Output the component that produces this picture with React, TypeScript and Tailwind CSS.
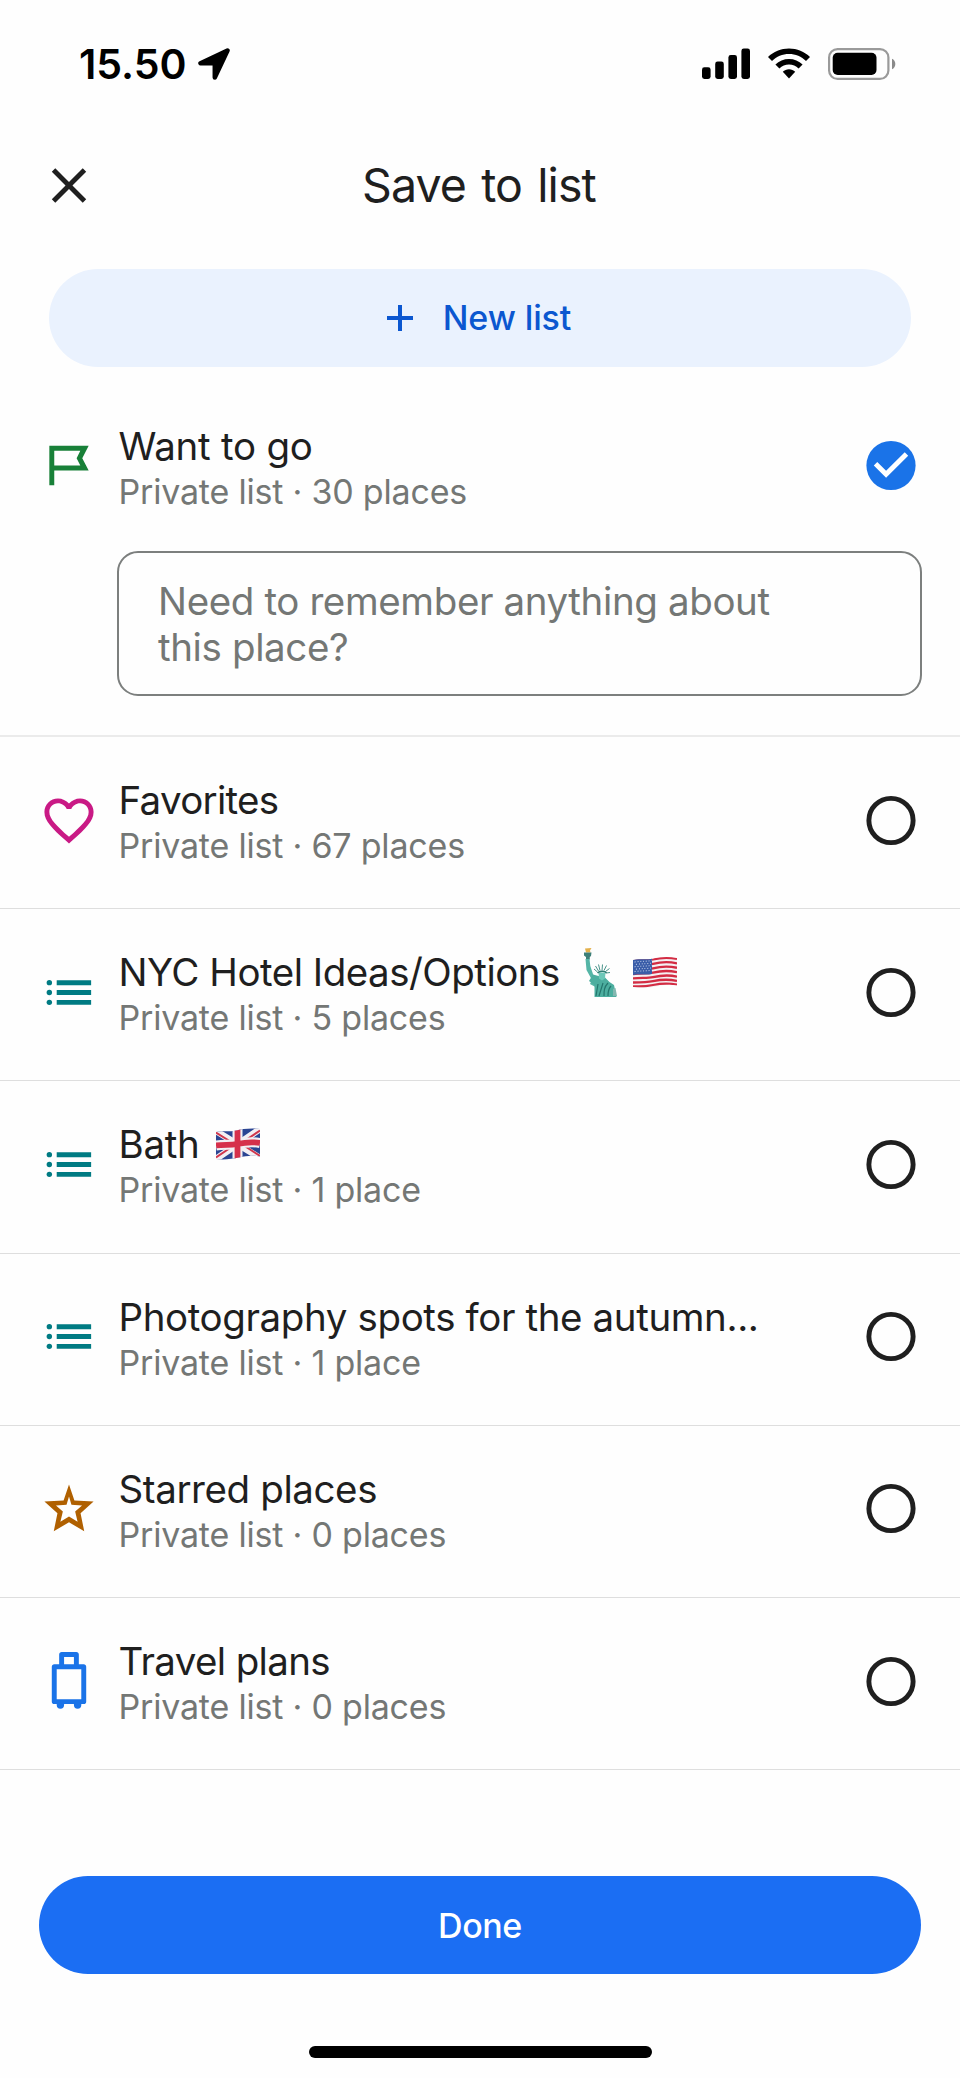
import { useState } from 'react';
import type { ReactNode } from 'react';

type IconName = 'flag' | 'heart' | 'list' | 'star' | 'luggage';

interface PlaceList {
  id: string;
  name: string;
  places: string;
  icon: IconName;
  tracking: string;
  emoji?: ReactNode;
}

function ListIcon({ name }: { name: IconName }) {
  if (name === 'flag') {
    return (
      <svg viewBox="0 0 24 24" className="w-[60px] h-[59px] shrink-0 text-[#188038]" fill="currentColor">
        <path fillRule="evenodd" d="M4 4h16l-2.6 5 2.6 5H6v6H4V4zm2 2v6h10.6l-1.5-3 1.5-3H6z" />
      </svg>
    );
  }
  if (name === 'heart') {
    return (
      <svg viewBox="0 0 24 24" className="w-[60px] h-[59px] shrink-0 text-[#c91a85]" fill="currentColor">
        <path d="M16.5 3c-1.74 0-3.41.81-4.5 2.09C10.91 3.81 9.24 3 7.5 3 4.42 3 2 5.42 2 8.5c0 3.78 3.4 6.86 8.55 11.54L12 21.35l1.45-1.32C18.6 15.36 22 12.28 22 8.5 22 5.42 19.58 3 16.5 3zm-4.4 15.55l-.1.1-.1-.1C7.14 14.24 4 11.39 4 8.5 4 6.5 5.5 5 7.5 5c1.54 0 3.04.99 3.57 2.36h1.87C13.46 5.99 14.96 5 16.5 5c2 0 3.5 1.5 3.5 3.5 0 2.89-3.14 5.74-7.9 10.05z" />
      </svg>
    );
  }
  if (name === 'list') {
    return (
      <svg viewBox="0 0 24 24" className="w-[60px] h-[59px] shrink-0 text-[#007b83]" fill="currentColor">
        <circle cx="4" cy="8" r="1.1" />
        <circle cx="4" cy="12" r="1.1" />
        <circle cx="4" cy="16" r="1.1" />
        <path d="M7 7h14v2H7zM7 11h14v2H7zM7 15h14v2H7z" />
      </svg>
    );
  }
  if (name === 'star') {
    return (
      <svg viewBox="0 0 24 24" className="w-[60px] h-[59px] shrink-0 text-[#b06000]" fill="currentColor">
        <path
          fillRule="evenodd"
          d="M12 2.200 14.200 8.700 22 9.200 16.700 13.900 18.200 21.300 12 17.600 5.800 21.300 7.300 13.900 2 9.200 9.800 8.700zM12 7.100 11 10.500 6.700 10.800 9.500 13.200 8.500 17.400 12 15.300 15.500 17.400 14.500 13.200 17.300 10.800 13 10.500z"
        />
      </svg>
    );
  }
  return (
    <svg viewBox="0 0 24 24" className="w-[60px] h-[59px] shrink-0 text-[#1a73e8]" fill="currentColor">
      <path
        fillRule="evenodd"
        d="M8 5V1c0-.55.45-1 1-1h6c.55 0 1 .45 1 1v4h2c.55 0 1 .45 1 1v14.200c0 .55-.45 1-1 1h-1v.4a1.500 1.500 0 0 1-3 0v-.4h-4v.4a1.500 1.500 0 0 1-3 0v-.4H6c-.55 0-1-.45-1-1V6c0-.55.45-1 1-1h2zm2-3v3h4V2h-4zM7 7v12.200h10V7H7z"
      />
    </svg>
  );
}

function LibertyEmoji() {
  return (
    <svg viewBox="0 0 34 50" className="w-[34px] h-[50px]">
      <path d="M2 1.500 8.500 1 7 3.500 7.500 5.500H3z" fill="#e3b04b" />
      <path d="M1 5.500h7.500L8 9 6.800 10v2.500H3V10L1 8.500z" fill="#3d7f78" />
      <path d="M2.500 12h4l.8 7 3 9 3.200 5-1 7-5.500-3 2-4L3.500 23z" fill="#55b5a6" />
      <path d="M6 34l4-6.500 5.500 1.500 6 1 5 5 4.500 3 2.500 12h-22V38z" fill="#4cae9f" />
      <path d="M15.500 25.500h7l-.5 6-3 2-3-2z" fill="#6cc7b8" />
      <path
        d="M14.500 25l-3.500-3M15.500 24l-3-5M17 23.500l-1.500-6M19 23.500l.5-6M21 23.500l2.500-5M22.500 24.500l4-3M23 26l4-.5"
        stroke="#4a948b"
        strokeWidth="1"
      />
      <path d="M14.500 26c2-2 7-2.500 9 0" stroke="#2f7d74" strokeWidth="1.600" fill="none" />
      <path d="M15 37l-2 12M20 36l-4 13M25 36c-4 4-4 8-4 13M28 39c-3 3-3 6-3 10" stroke="#24766d" strokeWidth="1.200" fill="none" />
      <path d="M30 42l2.500-1 1.500 8h-4z" fill="#83b7b0" />
    </svg>
  );
}

function UsFlagEmoji() {
  return (
    <svg viewBox="0 0 44 32" className="w-[44px] h-[32px]">
      <defs>
        <clipPath id="us-wave">
          <path d="M0 4c8-1.500 14 0 20-1.500S35 0 44 2v27.500c-8-1.500-14-.5-21 1S8 32 0 31z" />
        </clipPath>
      </defs>
      <g clipPath="url(#us-wave)">
        <rect width="44" height="32" fill="#f4f1f3" />
        <g stroke="#d32c43" strokeWidth="2.300" fill="none">
          <path d="M0 5c8-1.500 14 0 20-1.500S35 1 44 3" />
          <path d="M0 9.400c8-1.500 14 0 20-1.500s15-2.500 24-.5" />
          <path d="M0 13.800c8-1.500 14 0 20-1.500s15-2.500 24-.5" />
          <path d="M0 18.200c8-1.500 14 0 20-1.500s15-2.500 24-.5" />
          <path d="M0 22.400c8-1 14 0 20-1.300s15-2.500 24-.5" />
          <path d="M0 26.500c8 0 14 0 20-1.300s15-2.300 24-.3" />
          <path d="M0 30.300c8 .5 14 0 20-1.300s15-2.300 24-.3" />
        </g>
        <path d="M0 3.500c8-1.500 14 0 19-1.500V18c-6 1.200-11-.3-19 1z" fill="#3a5da8" />
        <g stroke="#c6d3ec" strokeWidth="1" strokeDasharray="1 1.800" fill="none">
          <path d="M1.500 6c7-1 12-.3 17-1.500" />
          <path d="M2.900 8.400c7-1 12-.3 16-1.500" />
          <path d="M1.500 10.800c7-1 12-.3 17-1.500" />
          <path d="M2.900 13.200c7-1 12-.3 16-1.500" />
          <path d="M1.500 15.600c7-1 12-.3 17-1.500" />
        </g>
      </g>
    </svg>
  );
}

function UkFlagEmoji() {
  return (
    <svg viewBox="0 0 44 32" className="w-[44px] h-[32px]">
      <defs>
        <clipPath id="uk-wave">
          <path d="M0 4c8-1.500 14 0 20-1.500S35 0 44 1v27.500c-8-1.500-14-.5-21 1S8 32 0 31z" />
        </clipPath>
      </defs>
      <g clipPath="url(#uk-wave)">
        <rect width="44" height="32" fill="#2b4593" />
        <path d="M0 3l44 27M0 31 44 1" stroke="#f3eff3" strokeWidth="6.500" />
        <path d="M0 4.500 20 17M24 16 44 2.500M0 29.500 20 16M24 15l20 13" stroke="#d0364c" strokeWidth="2" />
        <path d="M21.500 0v32M0 17.500c8-1.300 14 0 21-1.500s15-2.500 23-1" stroke="#f3eff3" strokeWidth="10" fill="none" />
        <path d="M21.500 0v32M0 17.500c8-1.300 14 0 21-1.500s15-2.500 23-1" stroke="#d6304b" strokeWidth="5.800" fill="none" />
      </g>
    </svg>
  );
}

const wantToGo: PlaceList = {
  id: 'want',
  name: 'Want to go',
  places: '30 places',
  icon: 'flag',
  tracking: 'tracking-[-0.25px]',
};

const lists: PlaceList[] = [
  { id: 'favorites', name: 'Favorites', places: '67 places', icon: 'heart', tracking: 'tracking-[-0.7px]' },
  {
    id: 'nyc',
    name: 'NYC Hotel Ideas/Options',
    places: '5 places',
    icon: 'list',
    tracking: 'tracking-[-0.5px]',
    emoji: (
      <span className="flex items-center ml-[23px] gap-[16px]">
        <LibertyEmoji />
        <UsFlagEmoji />
      </span>
    ),
  },
  {
    id: 'bath',
    name: 'Bath',
    places: '1 place',
    icon: 'list',
    tracking: 'tracking-[-0.3px]',
    emoji: (
      <span className="flex items-center ml-[17px]">
        <UkFlagEmoji />
      </span>
    ),
  },
  {
    id: 'photo',
    name: 'Photography spots for the autumn...',
    places: '1 place',
    icon: 'list',
    tracking: 'tracking-[-0.39px]',
  },
  { id: 'starred', name: 'Starred places', places: '0 places', icon: 'star', tracking: 'tracking-[-0.4px]' },
  { id: 'travel', name: 'Travel plans', places: '0 places', icon: 'luggage', tracking: 'tracking-[-0.65px]' },
];

function StatusBar() {
  return (
    <div className="h-[128px] shrink-0 flex items-center justify-between pl-[79px] pr-[64px]">
      <div className="flex items-center gap-[11px]">
        <span className="text-[41px] leading-none font-semibold text-black">15.50</span>
        <svg viewBox="0 0 32 32" className="w-[32px] h-[32px]">
          <path d="M29.500 2.500 2.500 15.300H16.800V29.500z" fill="#000" stroke="#000" strokeWidth="4.500" strokeLinejoin="round" />
        </svg>
      </div>
      <div className="flex items-center">
        <svg viewBox="0 0 48 32" className="w-[48px] h-[32px] mr-[18px]">
          <rect x="0" y="19.300" width="8.600" height="11.700" rx="2.400" />
          <rect x="13.200" y="13.500" width="8.600" height="17.500" rx="2.400" />
          <rect x="26.400" y="7" width="8.600" height="24" rx="2.400" />
          <rect x="39.400" y="0.500" width="8.600" height="30.500" rx="2.400" />
        </svg>
        <svg viewBox="0 0 42 32" className="w-[42px] h-[32px] mr-[18px]">
          <path d="M21 .5C29 .5 36.500 3.600 42 9l-4 4C33.500 8.500 27.500 6 21 6S8.500 8.500 4 13L0 9C5.500 3.600 13 .5 21 .5z" />
          <path d="M21 11c5.200 0 10 2 13.600 5.500l-4 4C28 18 24.700 16.500 21 16.500S14 18 11.400 20.500l-4-4C11 13 15.800 11 21 11z" />
          <path d="M21 21.300c2.400 0 4.600.9 6.200 2.500L21 30.500l-6.200-6.700c1.600-1.600 3.800-2.500 6.200-2.500z" />
        </svg>
        <svg viewBox="0 0 68 32" className="w-[68px] h-[32px]">
          <rect x="1.100" y="1.100" width="59.300" height="29.800" rx="8.500" fill="none" stroke="#9a9a9a" strokeWidth="2.200" />
          <rect x="4.700" y="4.700" width="43.800" height="22.300" rx="5" />
          <path d="M64 10.700c2 .8 3.300 2.900 3.300 5.200S66 20.300 64 21.200z" fill="#8a8a8a" />
        </svg>
      </div>
    </div>
  );
}

function Radio({ checked }: { checked: boolean }) {
  if (checked) {
    return (
      <svg viewBox="0 0 24 24" className="w-[60px] h-[59px] shrink-0">
        <circle cx="12" cy="12" r="10" fill="#1a73e8" />
        <path d="M10 17l-5-5 1.410-1.410L10 14.170l7.590-7.590L19 8l-9 9z" fill="#fff" />
      </svg>
    );
  }
  return (
    <svg viewBox="0 0 24 24" className="w-[60px] h-[59px] shrink-0">
      <circle cx="12" cy="12" r="9" fill="none" stroke="#1f1f1f" strokeWidth="2" />
    </svg>
  );
}

function ListRow({ list, checked, onToggle }: { list: PlaceList; checked: boolean; onToggle: () => void }) {
  return (
    <button onClick={onToggle} className="w-full h-full flex items-center px-[39px] pb-[5px] text-left cursor-pointer">
      <ListIcon name={list.icon} />
      <div className="flex-1 pl-[19.5px] pt-[7px]">
        <div className="h-[44px] flex items-center text-[38.5px] leading-[44px] text-[#1f1f1f] whitespace-nowrap">
          <span className={list.tracking}>{list.name}</span>
          {list.emoji}
        </div>
        <div className="text-[34px] leading-[47px] tracking-[-0.2px] text-[#747775]">Private list · {list.places}</div>
      </div>
      <Radio checked={checked} />
    </button>
  );
}

export default function App() {
  const [selected, setSelected] = useState<string[]>(['want']);
  const [note, setNote] = useState('');

  const toggle = (id: string) => {
    setSelected((prev) => (prev.includes(id) ? prev.filter((s) => s !== id) : [...prev, id]));
  };

  return (
    <div className="w-[960px] h-[2078px] flex flex-col bg-[#fefefe] font-[Inter,'Liberation_Sans',sans-serif] overflow-hidden">
      <StatusBar />

      {/* Header */}
      <header className="h-[114px] shrink-0 grid grid-cols-[60px_1fr_60px] items-center px-[39px]">
        <button className="cursor-pointer">
          <svg viewBox="0 0 24 24" className="w-[60px] h-[59px]" fill="#1f1f1f">
            <path d="M19 6.410L17.590 5 12 10.590 6.410 5 5 6.410 10.590 12 5 17.590 6.410 19 12 13.410 17.590 19 19 17.590 13.410 12z" />
          </svg>
        </button>
        <h1 className="text-center text-[46.5px] leading-[58px] tracking-[-0.9px] [word-spacing:3px] text-[#1f1f1f] pr-[2px]">
          Save to list
        </h1>
      </header>

      <div className="px-[49px] pt-[27px] shrink-0">
        <button className="w-full h-[98px] rounded-full bg-[#eaf2fe] flex items-center justify-center gap-[30px] pr-[2px] text-[#0b57d0] cursor-pointer">
          <svg viewBox="0 0 26 26" className="w-[26px] h-[26px]" stroke="currentColor" strokeWidth="4">
            <path d="M13 0v26M0 13h26" />
          </svg>
          <span className="text-[34px] leading-none font-medium tracking-[-0.1px]">New list</span>
        </button>
      </div>

      {/* Saved list with its note */}
      <section className="h-[370px] shrink-0 border-b-2 border-[#ebebeb] pt-[15px]">
        <div className="h-[172px]">
          <ListRow list={wantToGo} checked={selected.includes('want')} onToggle={() => toggle('want')} />
        </div>
        <div className="pl-[117px] pr-[38px] -mt-[3px]">
          <textarea
            value={note}
            onChange={(e) => setNote(e.target.value)}
            placeholder="Need to remember anything about this place?"
            className="block w-full h-[145px] resize-none rounded-[21px] border-2 border-[#7c7f7e] bg-transparent pl-[39px] pr-[120px] pt-[24.5px] text-[38.5px] leading-[46.5px] tracking-[-0.38px] text-[#1f1f1f] placeholder:text-[#747775] outline-none overflow-hidden"
          />
        </div>
      </section>

      <ul className="shrink-0">
        {lists.map((list) => (
          <li key={list.id} className="h-[172.2px] border-b border-[#dedede]">
            <ListRow list={list} checked={selected.includes(list.id)} onToggle={() => toggle(list.id)} />
          </li>
        ))}
      </ul>

      <div className="pt-[105.8px] px-[39px] shrink-0">
        <button className="w-full h-[98px] rounded-full bg-[#1b6ef3] text-white text-[34px] leading-none font-medium tracking-[-0.4px] pt-[2px] cursor-pointer">
          Done
        </button>
      </div>

      <div className="mt-[72px] mx-auto w-[343px] h-[12px] shrink-0 rounded-full bg-black" />
    </div>
  );
}
